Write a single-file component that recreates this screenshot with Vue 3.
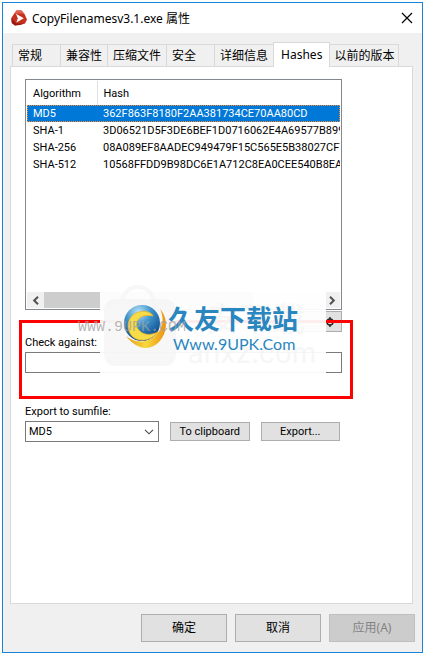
<script setup>
import { ref } from 'vue'

const tabs = ['常规', '兼容性', '压缩文件', '安全', '详细信息', 'Hashes', '以前的版本']
const activeTab = ref('Hashes')

const hashes = [
  { name: 'MD5', value: '362F863F8180F2AA381734CE70AA80CD' },
  { name: 'SHA-1', value: '3D06521D5F3DE6BEF1D0716062E4A69577B899' },
  { name: 'SHA-256', value: '08A089EF8AADEC949479F15C565E5B38027CF7' },
  { name: 'SHA-512', value: '10568FFDD9B98DC6E1A712C8EA0CEE540B8EA' }
]
const selected = ref('MD5')
const checkValue = ref('')
const exportType = ref('MD5')
</script>

<template>
  <div class="page">
    <div class="window">
      <header class="title-bar">
        <svg class="app-icon" width="16" height="16" viewBox="0 0 16 16">
          <path d="M5.5 0.5 L10.5 0.5 L13.5 4 L16 9.5 L14 13.5 L9 14.5 L4 15.5 L0.8 13 L0.3 8 L3 4 Z" fill="#c5301f" />
          <path d="M5.5 0.5 L10.5 0.5 L13.5 4 L9 3.5 L3 4 Z" fill="#e0604d" />
          <path d="M0.3 8 L5 13.5 L14 13.5 L9 15 L4 15.5 L0.8 13 Z" fill="#96190f" />
          <path d="M5 3.8 L12.8 8.2 L5.4 12.6 L6.8 8.4 Z" fill="#fff" />
        </svg>
        <h1>CopyFilenamesv3.1.exe 属性</h1>
        <button class="close" aria-label="关闭">
          <svg width="12" height="12" viewBox="0 0 12 12"><path d="M1 1 L11 11 M11 1 L1 11" stroke="#000" stroke-width="1.2" /></svg>
        </button>
      </header>

      <nav class="tabs">
        <button v-for="t in tabs" :key="t" class="tab" :class="{ active: activeTab === t }" @click="activeTab = t">{{ t }}</button>
      </nav>

      <main class="panel">
        <div class="list">
          <table>
            <thead>
              <tr><th class="name">Algorithm</th><th>Hash</th></tr>
            </thead>
            <tbody>
              <tr v-for="h in hashes" :key="h.name" :class="{ selected: selected === h.name }" @click="selected = h.name">
                <td>{{ h.name }}</td>
                <td>{{ h.value }}</td>
              </tr>
            </tbody>
          </table>
          <div class="scrollbar">
            <button aria-label="向左">
              <svg width="8" height="9" viewBox="0 0 8 9"><path d="M6 0.8 L2.2 4.5 L6 8.2" fill="none" stroke="#505050" stroke-width="2" /></svg>
            </button>
            <div class="track"><div class="thumb"></div></div>
            <button aria-label="向右">
              <svg width="8" height="9" viewBox="0 0 8 9"><path d="M2 0.8 L5.8 4.5 L2 8.2" fill="none" stroke="#505050" stroke-width="2" /></svg>
            </button>
          </div>
        </div>

        <button class="btn settings" aria-label="设置">
          <svg width="10" height="10" viewBox="0 0 10 10">
            <circle cx="5" cy="5" r="3" fill="none" stroke="#222" stroke-width="1.4" />
            <path d="M5 0 V2 M5 8 V10 M0 5 H2 M8 5 H10" stroke="#222" stroke-width="1.4" />
          </svg>
        </button>

        <div class="field">
          <label for="check">Check against:</label>
          <input id="check" v-model="checkValue" type="text" />
        </div>

        <div class="field export">
          <label for="sumfile">Export to sumfile:</label>
          <div class="export-row">
            <div class="select-wrap">
              <select id="sumfile" v-model="exportType">
                <option v-for="h in hashes" :key="h.name">{{ h.name }}</option>
              </select>
              <svg width="10" height="6" viewBox="0 0 10 6"><path d="M1 0.8 L5 4.8 L9 0.8" fill="none" stroke="#444" stroke-width="1.1" /></svg>
            </div>
            <button class="btn">To clipboard</button>
            <button class="btn">Export...</button>
          </div>
        </div>
      </main>

      <footer class="actions">
        <button class="btn">确定</button>
        <button class="btn">取消</button>
        <button class="btn" disabled>应用(A)</button>
      </footer>

      <div class="highlight"></div>

      <!-- 水印 -->
      <div class="watermark">
        <svg width="248" height="92" viewBox="0 0 248 92">
          <rect x="22" y="7" width="226" height="81" fill="#fff" fill-opacity="0.93" />
          <path d="M44 17 C46 -3 74 -3 76 17" fill="none" stroke="#f7f7f7" stroke-width="4" />
          <rect x="26" y="14" width="72" height="67" rx="11" fill="#f4f4f4" fill-opacity="0.7" />
          <text class="ghost" x="128" y="46" font-size="33">安下载</text>
          <text class="ghost" x="110" y="78" font-size="28">anxz.com</text>
          <defs>
            <radialGradient id="globe" cx="0.4" cy="0.2" r="0.8">
              <stop offset="0" stop-color="#b9e2f6" />
              <stop offset="0.45" stop-color="#3d93ca" />
              <stop offset="1" stop-color="#0d4a8c" />
            </radialGradient>
            <linearGradient id="gold" x1="0" y1="0" x2="1" y2="0">
              <stop offset="0" stop-color="#e99a18" />
              <stop offset="0.5" stop-color="#f7d83c" />
              <stop offset="1" stop-color="#ec9114" />
            </linearGradient>
          </defs>
          <circle cx="64" cy="38" r="18" fill="url(#globe)" />
          <path d="M82 24 C89 31 90 44 84 53 C76 66 60 67 48 51 C58 59 71 58 78 50 C86 42 86 33 82 24 Z" fill="url(#gold)" />
          <path d="M75 31 C72 25 61 25 55 30 C48 36 49 47 55 52 C63 58 74 55 80 47 C72 51 64 50 60 44 C56 37 61 28 75 31 Z" fill="#f6dc47" stroke="#edb129" stroke-width="0.8" />
          <text class="brand" x="90" y="44" font-size="26">久友下载站</text>
          <text class="site" x="95" y="65" font-size="16">Www.9UPK.Com</text>
          <text class="stamp" x="0" y="46" font-size="15">WWW.9UPK.COM</text>
        </svg>
      </div>
    </div>
  </div>
</template>

<style>
body { margin: 0; background: #fff; }
</style>

<style scoped>
* { box-sizing: border-box; }
.page { min-height: 100vh; padding: 2px 4px 4px 2px; display: flex; font-family: "Noto Sans", "Noto Sans CJK SC", sans-serif; font-size: 12px; color: #000; }
.window { position: relative; flex: 1; min-width: 0; display: flex; flex-direction: column; background: #f0f0f0; border: 1px solid #1883d7; }
button, input, select { font: inherit; color: inherit; border-radius: 0; margin: 0; }

.title-bar { display: flex; align-items: center; gap: 5px; height: 30px; padding: 0 9px 0 8px; background: #fff; }
.title-bar h1 { flex: 1; margin: 0; font-size: 12px; font-weight: 400; white-space: nowrap; }
.close { display: flex; padding: 0; border: 0; background: transparent; }

.tabs { display: flex; align-items: flex-end; height: 33px; padding: 0 9px; }
.tab { height: 22px; padding: 0 5px; border: 1px solid #d9d9d9; border-bottom: 0; border-right: 0; background: #f0f0f0; line-height: 20px; white-space: nowrap; text-align: left; }
.tab:nth-child(1) { padding-right: 18px; }
.tab:nth-child(4) { padding-right: 18px; }
.tab:last-child { padding: 0 4px; border-right: 1px solid #d9d9d9; border-left: 0; }
.tab.active { position: relative; height: 25px; margin-bottom: -1px; padding: 0 7px; border-right: 1px solid #d9d9d9; background: #fff; }

.panel { flex: 1; margin: 0 9px 0 7px; padding: 12px 70px 12px 14px; border: 1px solid #d9d9d9; background: #fff; font-family: Roboto, "Noto Sans CJK SC", sans-serif; font-size: 11px; }
.list { display: flex; flex-direction: column; justify-content: space-between; height: 231px; padding: 1px; border: 1px solid #828790; overflow: hidden; }
table { width: 100%; table-layout: fixed; border-collapse: collapse; }
th, td { padding: 0 0 0 6px; font-weight: 400; text-align: left; white-space: nowrap; overflow: hidden; }
th { height: 24px; }
th.name { width: 70px; border-right: 1px solid #e0e0e0; }
td { height: 17px; line-height: 15px; }
tr.selected { background: #0078d7; color: #fff; outline: 1px dotted #ff8728; outline-offset: -1px; }
.scrollbar { display: flex; height: 16px; background: #f0f0f0; }
.scrollbar button { display: flex; align-items: center; justify-content: center; width: 17px; padding: 0; border: 0; background: transparent; }
.track { flex: 1; }
.thumb { width: 75%; height: 100%; background: #cdcdcd; }

.btn { height: 19px; padding: 0; border: 1px solid #adadad; background: #e1e1e1; text-align: center; line-height: 16px; }
.settings { display: flex; align-items: center; justify-content: flex-end; width: 80px; height: 21px; margin: 1px 0 0 auto; padding-right: 6px; }

.field { display: flex; flex-direction: column; gap: 1px; margin-top: 3px; }
.field label { line-height: 16px; }
.field input { width: 100%; height: 21px; padding: 0 4px; border: 1px solid #7a7a7a; background: #fff; }
.export { margin-top: 31px; }
.export-row { display: flex; align-items: center; gap: 11px; padding-right: 2px; }
.export-row .btn { flex: 1; }
.select-wrap { display: flex; align-items: center; width: 134px; height: 21px; padding-right: 4px; border: 1px solid #7a7a7a; }
.select-wrap select { flex: 1; height: 19px; padding: 0 3px; border: 0; background: transparent; appearance: none; }

.actions { display: flex; justify-content: flex-end; gap: 8px; padding: 10px 7px; }
.actions .btn { width: 86px; height: 28px; line-height: 24px; }
.actions .btn:disabled { background: #cccccc; border-color: #bfbfbf; color: #838383; }

.highlight { position: absolute; top: 317px; left: 16px; right: 69px; height: 79px; border: 3px solid #f00; pointer-events: none; }
.watermark { position: absolute; top: 282px; left: 75px; pointer-events: none; }
.watermark svg { display: block; overflow: visible; }
.ghost { font-family: Inter, "Noto Sans CJK SC", sans-serif; font-weight: 400; fill: #f4f4f4; fill-opacity: 0.8; }
.brand { font-family: "Noto Sans CJK SC", sans-serif; font-weight: 700; fill: #2a86bf; }
.site { font-family: Lato, sans-serif; fill: #2a86bf; }
.stamp { font-family: "Liberation Mono", monospace; fill: #a0a0a0; fill-opacity: 0.75; }
</style>
